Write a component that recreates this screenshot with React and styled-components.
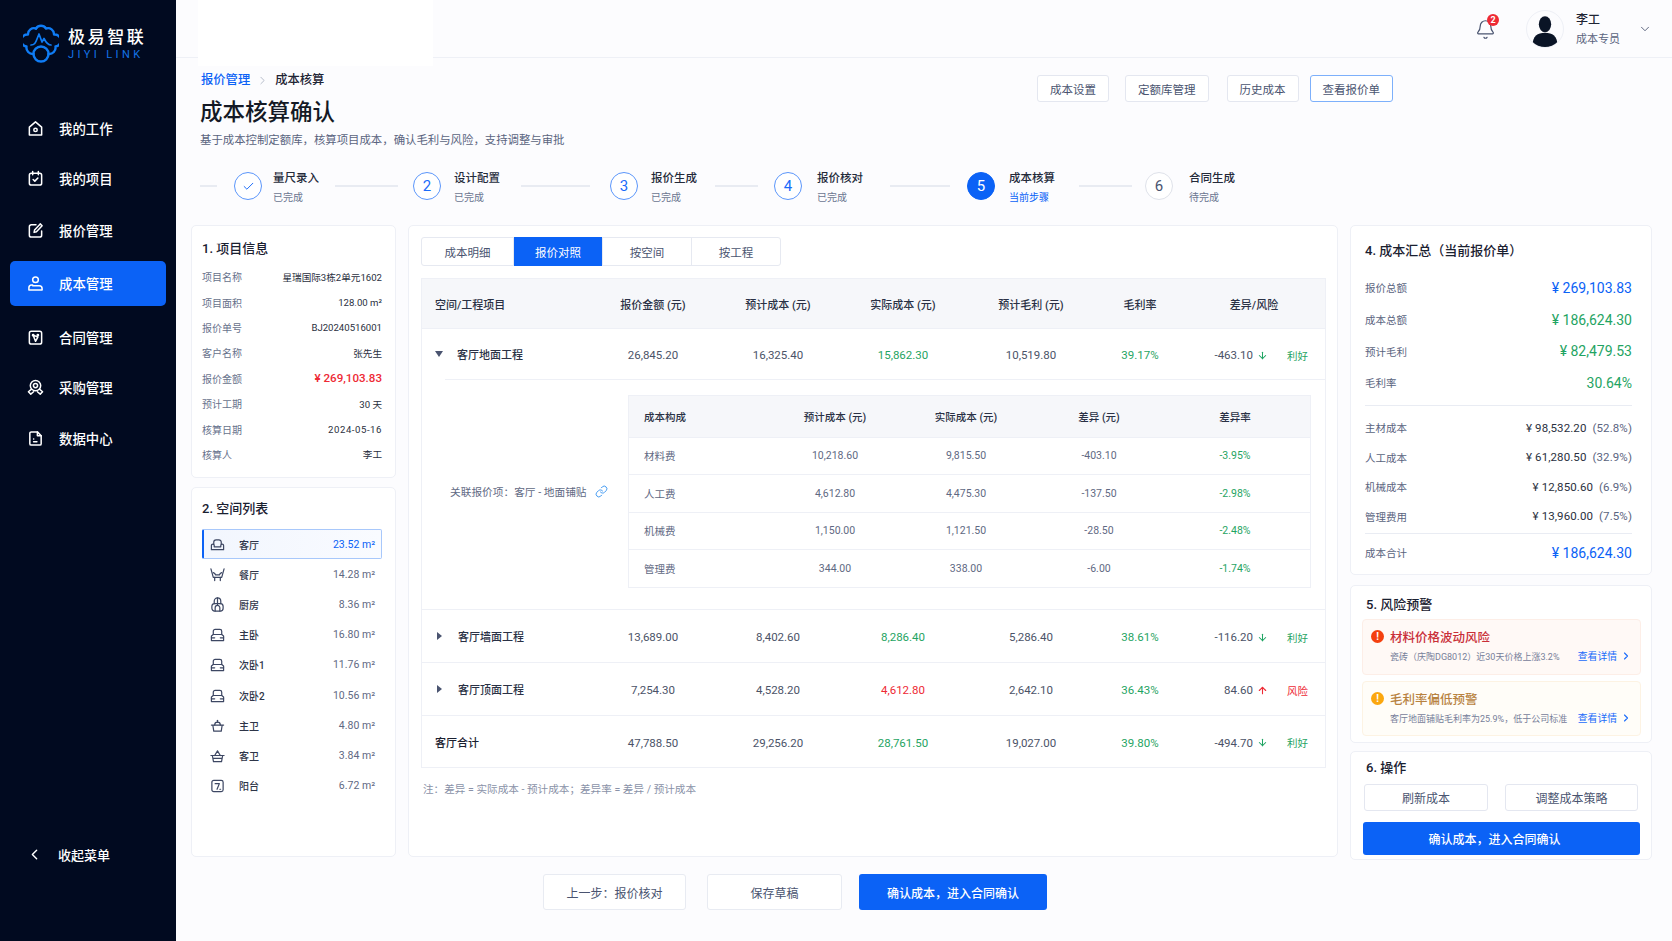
import React from 'react';
import styled, { createGlobalStyle } from 'styled-components';
import { Bell, Check, ChevronDown, ChevronLeft, ChevronRight, Link as LinkIcon, ArrowDown, ArrowUp } from 'lucide-react';

const GlobalStyle = createGlobalStyle`
    * { box-sizing: border-box; }
    html, body { margin: 0; padding: 0; height: 100%; }
    body {
        font-family: Roboto, "Noto Sans CJK SC", sans-serif;
        color: #1f2535;
        background: #fcfcfe;
        overflow: hidden;
    }
`;

const BLUE = '#0b62f6';
const GREEN = '#1fa463';
const RED = '#ee2a35';

/* testi con punteggiatura a tutta larghezza */
const TXT = {
    subtitle: '基于成本控制定额库\uFF0C核算项目成本\uFF0C确认毛利与风险\uFF0C支持调整与审批',
    related: '关联报价项\uFF1A客厅 - 地面铺贴',
    note: '注\uFF1A差异 = 实际成本 - 预计成本\uFF1B差异率 = 差异 / 预计成本',
    summary: '4. 成本汇总\uFF08当前报价单\uFF09',
    alertA: '瓷砖\uFF08庆陶DG8012\uFF09近30天价格上涨3.2%',
    alertB: '客厅地面铺贴毛利率为25.9%\uFF0C低于公司标准',
    confirm: '确认成本\uFF0C进入合同确认',
    prev: '上一步\uFF1A报价核对',
};

/* icone menu */
const NavIcon = ({ children }) => (
    <svg width="17" height="17" viewBox="0 0 18 18" fill="none" stroke="#fff" strokeWidth="1.6" strokeLinecap="round" strokeLinejoin="round">
        {children}
    </svg>
);

const navItems = [
    { label: '我的工作', top: 0, icon: <><path d="M2.5 7.5 9 2l6.5 5.5V16h-13z" /><circle cx="9" cy="10.5" r="1.8" /></> },
    { label: '我的项目', top: 5, icon: <><rect x="2.5" y="3.5" width="13" height="12.5" rx="2" /><path d="M6 1.5v3.5M12 1.5v3.5M6.5 10l1.8 1.8L11.5 8.5" /></> },
    { label: '报价管理', top: 7, icon: <><path d="M15.5 9.5V14a2 2 0 0 1-2 2h-9a2 2 0 0 1-2-2V5a2 2 0 0 1 2-2h5" /><path d="M14 2 8 8.5 7.5 11l2.5-.6L16 4z" /></> },
    { label: '成本管理', top: 8, active: true, icon: <><circle cx="9" cy="5" r="3" /><path d="M6 10.5H5a3 3 0 0 0-3 3V16h14v-1.5a3 3 0 0 0-3-3H6z" /></> },
    { label: '合同管理', top: 9, icon: <><rect x="2.5" y="2.5" width="13" height="13.5" rx="2" /><path d="m6.5 6.5 5 2-2.5 4.5z" /><circle cx="6.5" cy="6.5" r=".7" /><circle cx="11.5" cy="6.5" r=".7" /></> },
    { label: '采购管理', top: 5, icon: <><circle cx="9" cy="7" r="5.5" /><circle cx="9" cy="7" r="2.2" /><path d="M4.5 11 1.5 13.5 4 16l3-2.5M13.5 11l3 2.5L14 16l-3-2.5" /></> },
    { label: '数据中心', top: 6, icon: <><path d="M3 3.5A1.5 1.5 0 0 1 4.5 2H11l4 4v8.500a1.500 1.500 0 0 1-1.500 1.500h-9A1.500 1.500 0 0 1 3 14.500z" /><path d="M11 2v4h4M7 9.500h.1M7 12.500h3.500" /></> },
];

const steps = [
    { n: 1, title: '量尺录入', sub: '已完成', state: 'done', line: [17, 0, 17], gap: 11 },
    { n: 2, title: '设计配置', sub: '已完成', state: 'done', line: [63, 16, 15], gap: 13 },
    { n: 3, title: '报价生成', sub: '已完成', state: 'done', line: [69, 21, 20], gap: 13 },
    { n: 4, title: '报价核对', sub: '已完成', state: 'done', line: [43, 18, 16], gap: 15 },
    { n: 5, title: '成本核算', sub: '当前步骤', state: 'current', line: [60, 27, 17], gap: 14 },
    { n: 6, title: '合同生成', sub: '待完成', state: 'todo', line: [53, 24, 13], gap: 16 },
];

const projectInfo = [
    { k: '项目名称', v: '星瑞国际3栋2单元1602' },
    { k: '项目面积', v: '128.00 m²' },
    { k: '报价单号', v: 'BJ20240516001' },
    { k: '客户名称', v: '张先生' },
    { k: '报价金额', v: '¥ 269,103.83', strong: true },
    { k: '预计工期', v: '30 天' },
    { k: '核算日期', v: '2024-05-16', spaced: true },
    { k: '核算人', v: '李工' },
];

/* icone spazi */
const sofa = <><path d="M4 7.5v-2A2.5 2.5 0 0 1 6.5 3h3A2.5 2.5 0 0 1 12 5.5v2" /><path d="M1.500 9a1.500 1.500 0 0 1 3 0v1.500h7V9a1.500 1.500 0 0 1 3 0v4.500h-13z" /></>;
const bed = <><path d="M3.500 8V4.500a2 2 0 0 1 2-2h5a2 2 0 0 1 2 2V8" /><path d="M1.500 9.500 3.500 8h9l2 1.500v5h-13z" /><path d="M1.500 11.500h3.500M11 11.500h3.500" /></>;
const basket = <><path d="M1.500 7.500h13M3 7.500l1 6.500h8l1-6.500" /><path d="M5 7.500a3 3 0 0 1 6 0" /><path d="M8 2.500v2" /></>;
const basket2 = <><path d="M1 8h14M2.500 8l1.200 6.500h8.600L13.500 8M3.500 11h9" /><path d="M5 8l3-5 3 5" /></>;
const spaces = [
    { name: '客厅', area: '23.52 m²', icon: sofa, active: true },
    { name: '餐厅', area: '14.28 m²', icon: <><path d="M1 2 3.500 11h9L15 2" /><path d="M3.500 6c1.500.5 2 1 2.500 2.500h4c.5-1.500 1-2 2.500-2.500M5 11v3.500M11 11v3.500" /></> },
    { name: '厨房', area: '8.36 m²', icon: <><path d="M4.500 7V4.500a3.500 3.500 0 0 1 7 0V7" /><rect x="2" y="7" width="12" height="8" rx="3" /><path d="M5.500 15v-3.500a2.500 2.500 0 0 1 5 0V15M8 1v8" /></> },
    { name: '主卧', area: '16.80 m²', icon: bed },
    { name: '次卧1', area: '11.76 m²', icon: bed },
    { name: '次卧2', area: '10.56 m²', icon: bed },
    { name: '主卫', area: '4.80 m²', icon: basket },
    { name: '客卫', area: '3.84 m²', icon: basket2 },
    { name: '阳台', area: '6.72 m²', icon: <><rect x="2" y="2.5" width="12" height="12" rx="2" /><path d="M5.500 6h4.500L7.500 12M10.500 12h.8" /></> },
];

const tabs = ['成本明细', '报价对照', '按空间', '按工程'];
const headCols = ['空间/工程项目', '报价金额 (元)', '预计成本 (元)', '实际成本 (元)', '预计毛利 (元)', '毛利率', '差异/风险'];

const subHead = ['成本构成', '预计成本 (元)', '实际成本 (元)', '差异 (元)', '差异率'];
const subRows = [
    ['材料费', '10,218.60', '9,815.50', '-403.10', '-3.95%'],
    ['人工费', '4,612.80', '4,475.30', '-137.50', '-2.98%'],
    ['机械费', '1,150.00', '1,121.50', '-28.50', '-2.48%'],
    ['管理费', '344.00', '338.00', '-6.00', '-1.74%'],
];

const summaryTop = [
    ['报价总额', '¥ 269,103.83', 'blue'],
    ['成本总额', '¥ 186,624.30', 'green'],
    ['预计毛利', '¥ 82,479.53', 'green'],
    ['毛利率', '30.64%', 'green'],
];
const summaryCost = [
    ['主材成本', '¥ 98,532.20', '(52.8%)'],
    ['人工成本', '¥ 61,280.50', '(32.9%)'],
    ['机械成本', '¥ 12,850.60', '(6.9%)'],
    ['管理费用', '¥ 13,960.00', '(7.5%)'],
];

const Risk = ({ risky, value }) => (
    <RiskCell>
        {value}
        <RiskArrow $risky={risky}>{risky ? <ArrowUp size={11} strokeWidth={2.4} /> : <ArrowDown size={11} strokeWidth={2.2} />}</RiskArrow>
        <RiskTag $risky={risky}>{risky ? '风险' : '利好'}</RiskTag>
    </RiskCell>
);

const ProjectRow = ({ name, open, vals, actual, rate, diff, risky, h }) => (
    <Row $h={h} $line>
        <NameCell>
            <Caret $open={open} />
            {name}
        </NameCell>
        <NumCell>{vals[0]}</NumCell>
        <NumCell>{vals[1]}</NumCell>
        <NumCell $color={risky ? RED : GREEN}>{actual}</NumCell>
        <NumCell>{vals[2]}</NumCell>
        <NumCell $color={GREEN}>{rate}</NumCell>
        <Risk risky={risky} value={diff} />
    </Row>
);

const App = () => {
    return (
        <Page>
            <GlobalStyle />
            <Sidebar>
                <Brand>
                    <svg width="36" height="42" viewBox="0 0 36 42" fill="none" stroke="#0f7cf5" strokeWidth="2.4" strokeLinecap="round" strokeLinejoin="round">
                        <path d="M13 6.5a6 6 0 0 1 10 0 6 6 0 0 1 8 6 6 6 0 0 1 1.500 12 6.500 6.500 0 0 1-7 7.500" />
                        <path d="M13 6.5a6 6 0 0 0-8 6 6 6 0 0 0-1.500 12 6.500 6.500 0 0 0 7 7.500" />
                        <circle cx="18" cy="32" r="7.5" />
                        <path d="M8 23c3.500 0 4.500-2 6-6l2-5 3 8 2-3.500c1.500 3 3.500 6.500 7 6.500" strokeWidth="1.7" />
                    </svg>
                    <BrandText>
                        <BrandName>极易智联</BrandName>
                        <BrandSub>JIYI LINK</BrandSub>
                    </BrandText>
                </Brand>
                <NavList>
                    {navItems.map((item) => (
                        <NavItem key={item.label} $active={item.active} $top={item.top}>
                            <NavIcon>{item.icon}</NavIcon>
                            {item.label}
                        </NavItem>
                    ))}
                </NavList>
                <Collapse>
                    <ChevronLeft size={17} strokeWidth={2} />
                    收起菜单
                </Collapse>
            </Sidebar>

            <Main>
                <Topbar>
                    <TopBlank />
                    <BellWrap>
                        <Bell size={21} strokeWidth={1.4} color="#4a5470" />
                        <Badge>2</Badge>
                    </BellWrap>
                    <Avatar>
                        <svg width="38" height="38" viewBox="0 0 38 38">
                            <ellipse cx="19" cy="14" rx="6.5" ry="8.5" fill="#0a1426" />
                            <path d="M6 35c0-8 5-12 13-12s13 4 13 12c-3 2-8 3-13 3s-10-1-13-3z" fill="#0a1426" />
                        </svg>
                    </Avatar>
                    <UserText>
                        <UserName>李工</UserName>
                        <UserRole>成本专员</UserRole>
                    </UserText>
                    <ChevronDown size={14} strokeWidth={1.5} color="#4a5470" />
                </Topbar>

                <Content>
                    <Head>
                        <div>
                            <Crumbs>
                                <CrumbLink>报价管理</CrumbLink>
                                <ChevronRight size={13} strokeWidth={1.3} color="#9aa2b5" />
                                <span>成本核算</span>
                            </Crumbs>
                            <Title>成本核算确认</Title>
                            <Subtitle>{TXT.subtitle}</Subtitle>
                        </div>
                        <HeadButtons>
                            <ToolBtn>成本设置</ToolBtn>
                            <ToolBtn>定额库管理</ToolBtn>
                            <ToolBtn>历史成本</ToolBtn>
                            <ToolBtn $active>查看报价单</ToolBtn>
                        </HeadButtons>
                    </Head>

                    <Steps>
                        {steps.map((s) => (
                            <React.Fragment key={s.n}>
                                <StepLine $w={s.line[0]} $before={s.line[1]} $after={s.line[2]} />
                                <Step $gap={s.gap}>
                                    <StepCircle $state={s.state}>
                                        {s.n === 1 ? <Check size={13} strokeWidth={1.8} /> : s.n}
                                    </StepCircle>
                                    <StepText>
                                        <StepTitle>{s.title}</StepTitle>
                                        <StepSub $current={s.state === 'current'}>{s.sub}</StepSub>
                                    </StepText>
                                </Step>
                            </React.Fragment>
                        ))}
                    </Steps>

                    <Board>
                        <Column>
                            <InfoCard>
                                <CardTitle>1. 项目信息</CardTitle>
                                {projectInfo.map((r) => (
                                    <InfoRow key={r.k}>
                                        <InfoKey>{r.k}</InfoKey>
                                        <InfoVal $strong={r.strong} $spaced={r.spaced}>{r.v}</InfoVal>
                                    </InfoRow>
                                ))}
                            </InfoCard>
                            <SpaceCard>
                                <CardTitle>2. 空间列表</CardTitle>
                                <SpaceList>
                                    {spaces.map((s) => (
                                        <SpaceRow key={s.name} $active={s.active}>
                                            <svg width="15" height="15" viewBox="0 0 16 16" fill="none" stroke="#3d4763" strokeWidth="1.3" strokeLinecap="round" strokeLinejoin="round">
                                                {s.icon}
                                            </svg>
                                            <SpaceName>{s.name}</SpaceName>
                                            <SpaceArea $active={s.active}>{s.area}</SpaceArea>
                                        </SpaceRow>
                                    ))}
                                </SpaceList>
                            </SpaceCard>
                        </Column>

                        <TableCard>
                            <Tabs>
                                {tabs.map((t) => (
                                    <Tab key={t} $active={t === '报价对照'}>{t}</Tab>
                                ))}
                            </Tabs>
                            <Table>
                                <HeadRow>
                                    {headCols.map((c, i) => (
                                        <HeadCell key={c} $left={i === 0}>{c}</HeadCell>
                                    ))}
                                </HeadRow>
                                <ProjectRow name="客厅地面工程" open h={50} vals={['26,845.20', '16,325.40', '10,519.80']} actual="15,862.30" rate="39.17%" diff="-463.10" />
                                <InsetLine />
                                <Expand>
                                    <Related>
                                        {TXT.related}
                                        <LinkIcon size={13} strokeWidth={1.6} color="#2a8cf0" />
                                    </Related>
                                    <SubTable>
                                        <SubHeadRow>
                                            {subHead.map((c, i) => (
                                                <SubCell key={c} $left={i === 0} $head>{c}</SubCell>
                                            ))}
                                        </SubHeadRow>
                                        {subRows.map((r) => (
                                            <SubRow key={r[0]}>
                                                <SubCell $left>{r[0]}</SubCell>
                                                <SubCell>{r[1]}</SubCell>
                                                <SubCell>{r[2]}</SubCell>
                                                <SubCell>{r[3]}</SubCell>
                                                <SubCell $green>{r[4]}</SubCell>
                                            </SubRow>
                                        ))}
                                    </SubTable>
                                </Expand>
                                <ProjectRow name="客厅墙面工程" h={53} vals={['13,689.00', '8,402.60', '5,286.40']} actual="8,286.40" rate="38.61%" diff="-116.20" />
                                <ProjectRow name="客厅顶面工程" h={53} vals={['7,254.30', '4,528.20', '2,642.10']} actual="4,612.80" rate="36.43%" diff="84.60" risky />
                                <Row $h={51}>
                                    <TotalName>客厅合计</TotalName>
                                    <NumCell>47,788.50</NumCell>
                                    <NumCell>29,256.20</NumCell>
                                    <NumCell $color={GREEN}>28,761.50</NumCell>
                                    <NumCell>19,027.00</NumCell>
                                    <NumCell $color={GREEN}>39.80%</NumCell>
                                    <Risk value="-494.70" />
                                </Row>
                            </Table>
                            <Note>{TXT.note}</Note>
                        </TableCard>

                        <Column>
                            <SummaryCard>
                                <CardTitle>{TXT.summary}</CardTitle>
                                {summaryTop.map(([k, v, tone]) => (
                                    <BigRow key={k}>
                                        <SumKey>{k}</SumKey>
                                        <BigVal $tone={tone}>{v}</BigVal>
                                    </BigRow>
                                ))}
                                <SumLine $top={6} $bottom={7} />
                                {summaryCost.map(([k, v, pct]) => (
                                    <SmallRow key={k}>
                                        <SumKey>{k}</SumKey>
                                        <SmallVal>{v}<Pct>{pct}</Pct></SmallVal>
                                    </SmallRow>
                                ))}
                                <SumLine $top={2} $bottom={3} />
                                <BigRow>
                                    <SumKey>成本合计</SumKey>
                                    <BigVal $tone="blue">¥ 186,624.30</BigVal>
                                </BigRow>
                            </SummaryCard>

                            <RiskCard>
                                <CardTitle>5. 风险预警</CardTitle>
                                <Alert $tone="red">
                                    <AlertHead>
                                        <AlertDot $tone="red">!</AlertDot>
                                        <AlertTitle $tone="red">材料价格波动风险</AlertTitle>
                                    </AlertHead>
                                    <AlertBody>
                                        {TXT.alertA}
                                        <AlertLink>查看详情<ChevronRight size={12} strokeWidth={2.2} /></AlertLink>
                                    </AlertBody>
                                </Alert>
                                <Alert $tone="amber">
                                    <AlertHead>
                                        <AlertDot $tone="amber">!</AlertDot>
                                        <AlertTitle $tone="amber">毛利率偏低预警</AlertTitle>
                                    </AlertHead>
                                    <AlertBody>
                                        {TXT.alertB}
                                        <AlertLink>查看详情<ChevronRight size={12} strokeWidth={2.2} /></AlertLink>
                                    </AlertBody>
                                </Alert>
                            </RiskCard>

                            <ActionCard>
                                <CardTitle>6. 操作</CardTitle>
                                <ActionRow>
                                    <ActionBtn $w={124}>刷新成本</ActionBtn>
                                    <ActionBtn $w={133}>调整成本策略</ActionBtn>
                                </ActionRow>
                                <ConfirmBtn>{TXT.confirm}</ConfirmBtn>
                            </ActionCard>
                        </Column>
                    </Board>

                    <Footer>
                        <FootBtn $w={143}>{TXT.prev}</FootBtn>
                        <FootBtn $w={135}>保存草稿</FootBtn>
                        <FootBtn $w={188} $primary>{TXT.confirm}</FootBtn>
                    </Footer>
                </Content>
            </Main>
        </Page>
    );
};

/* PAGINA */
const Page = styled.div`
    display: flex;
    width: 1672px;
    height: 941px;
    overflow: hidden;
`;

/* SIDEBAR */
const Sidebar = styled.aside`
    width: 176px;
    flex-shrink: 0;
    background: #010a20;
    color: #fff;
    display: flex;
    flex-direction: column;
    padding: 22px 10px 0;
`;

const Brand = styled.div`
    display: flex;
    align-items: center;
    gap: 9px;
    padding-left: 13px;
    height: 42px;
`;

const BrandText = styled.div`
    display: flex;
    flex-direction: column;
    margin-top: 3px;
`;

const BrandName = styled.div`
    font-size: 17px;
    line-height: 21px;
    letter-spacing: 2.6px;
    font-weight: 500;
`;

const BrandSub = styled.div`
    font-size: 11px;
    line-height: 14px;
    letter-spacing: 3.4px;
    color: #1474e6;
`;

const NavList = styled.nav`
    display: flex;
    flex-direction: column;
    margin-top: 41.5px;
`;

const NavItem = styled.div`
    height: 45px;
    flex-shrink: 0;
    margin-top: ${(p) => p.$top}px;
    display: flex;
    align-items: center;
    gap: 15px;
    padding-left: 17px;
    border-radius: 5px;
    font-size: 13.4px;
    font-weight: 500;
    background: ${(p) => (p.$active ? '#0b62f6' : 'transparent')};
`;

const Collapse = styled.div`
    display: flex;
    align-items: center;
    gap: 15px;
    padding-left: 16px;
    margin-top: auto;
    margin-bottom: 77px;
    font-size: 13px;
    font-weight: 500;
`;

/* TOPBAR */
const Main = styled.main`
    flex: 1;
    min-width: 0;
    display: flex;
    flex-direction: column;
`;

const Topbar = styled.header`
    position: relative;
    height: 58px;
    flex-shrink: 0;
    display: flex;
    align-items: center;
    justify-content: flex-end;
    padding-right: 20px;
    border-bottom: 1px solid #eef0f6;
`;

const TopBlank = styled.div`
    position: absolute;
    left: 22px;
    top: 0;
    width: 235px;
    height: 66px;
    background: #fff;
`;

const BellWrap = styled.div`
    position: relative;
    display: flex;
    margin: 2px 30px 0 0;
`;

const Badge = styled.span`
    position: absolute;
    top: -5px;
    right: -3px;
    width: 12px;
    height: 12px;
    border-radius: 50%;
    background: ${RED};
    color: #fff;
    font-size: 9px;
    font-weight: 700;
    line-height: 12px;
    text-align: center;
`;

const Avatar = styled.div`
    width: 38px;
    height: 38px;
    border-radius: 50%;
    border: 1px solid #eef0f6;
    overflow: hidden;
    display: flex;
    align-items: center;
    justify-content: center;
    margin-right: 12px;
`;

const UserText = styled.div`
    width: 62px;
    margin-top: 3px;
`;

const UserName = styled.div`
    font-size: 12px;
    line-height: 20px;
    font-weight: 500;
`;

const UserRole = styled.div`
    font-size: 11px;
    line-height: 20px;
    color: #5a6480;
`;

/* INTESTAZIONE */
const Content = styled.div`
    position: relative;
    flex: 1;
    padding: 0 20px 0 15px;
`;

const Head = styled.div`
    display: flex;
    justify-content: space-between;
    align-items: flex-start;
    padding: 13px 259px 0 10px;
`;

const Crumbs = styled.div`
    display: flex;
    align-items: center;
    gap: 6px;
    font-size: 12.3px;
    line-height: 18px;
    font-weight: 500;
`;

const CrumbLink = styled.span`
    color: ${BLUE};
`;

const Title = styled.h1`
    margin: 8px 0 0 -1px;
    font-size: 22.5px;
    line-height: 30px;
    font-weight: 500;
    color: #141925;
`;

const Subtitle = styled.p`
    margin: 5px 0 0 -1px;
    font-size: 11.4px;
    line-height: 16px;
    color: #5a6480;
`;

const HeadButtons = styled.div`
    display: flex;
    padding-top: 4px;

    & > :nth-child(1) { margin-right: 16px; }
    & > :nth-child(2) { margin-right: 18px; }
    & > :nth-child(3) { margin-right: 11px; }
`;

const ToolBtn = styled.button`
    height: 27px;
    padding: 0 12px;
    border-radius: 3px;
    border: 1px solid ${(p) => (p.$active ? '#7db0fb' : '#e4e7f0')};
    background: #fff;
    color: #4a5470;
    font: inherit;
    font-size: 11.5px;
`;

/* STEPPER */
const Steps = styled.div`
    display: flex;
    align-items: center;
    height: 40px;
    margin-top: 18px;
    padding-left: 9px;
`;

const StepLine = styled.div`
    width: ${(p) => p.$w}px;
    height: 2px;
    flex-shrink: 0;
    margin: 0 ${(p) => p.$after}px 0 ${(p) => p.$before}px;
    background: #e8ebf2;
`;

const Step = styled.div`
    display: flex;
    align-items: center;
    gap: ${(p) => p.$gap}px;
`;

const StepText = styled.div`
    margin-top: 4px;
`;

const StepCircle = styled.div`
    width: 28px;
    height: 28px;
    flex-shrink: 0;
    border-radius: 50%;
    display: flex;
    align-items: center;
    justify-content: center;
    font-size: 15px;
    background: ${(p) => (p.$state === 'current' ? BLUE : '#fff')};
    color: ${(p) => (p.$state === 'current' ? '#fff' : p.$state === 'todo' ? '#4a5470' : '#1a6bfa')};
    border: 1.5px solid ${(p) => (p.$state === 'current' ? BLUE : p.$state === 'todo' ? '#dfe2ea' : '#5b96fb')};
`;

const StepTitle = styled.div`
    font-size: 11.5px;
    line-height: 20px;
    font-weight: 500;
    color: #242a3a;
`;

const StepSub = styled.div`
    font-size: 10px;
    line-height: 20px;
    color: ${(p) => (p.$current ? BLUE : '#6b7590')};
`;

/* GRIGLIA CENTRALE */
const Board = styled.div`
    display: grid;
    grid-template-columns: 205px 930px 302px;
    grid-template-rows: 632px;
    gap: 12px;
    margin-top: 19px;
`;

const Column = styled.div`
    display: flex;
    flex-direction: column;
    gap: 9px;
    min-height: 0;
`;

const Card = styled.section`
    background: #fff;
    border: 1px solid #eef0f6;
    border-radius: 5px;
`;

const CardTitle = styled.h3`
    margin: 0;
    font-size: 13px;
    line-height: 20px;
    font-weight: 500;
    color: #1a2030;
`;

/* PROGETTO */
const InfoCard = styled(Card)`
    height: 253px;
    padding: 13px 13px 0 10px;

    h3 { margin-bottom: 5px; }
`;

const InfoRow = styled.div`
    display: flex;
    align-items: center;
    justify-content: space-between;
    height: 25.4px;
    font-size: 10px;
`;

const InfoKey = styled.span`
    color: #68728c;
`;

const InfoVal = styled.span`
    color: ${(p) => (p.$strong ? RED : '#2a3040')};
    font-size: ${(p) => (p.$strong ? '11.6px' : '9.6px')};
    font-weight: ${(p) => (p.$strong ? 500 : 400)};
    letter-spacing: ${(p) => (p.$spaced ? '.55px' : '0')};
`;

/* SPAZI */
const SpaceCard = styled(Card)`
    flex: 1;
    padding: 11px 13px 0 10px;
`;

const SpaceList = styled.div`
    margin-top: 10px;
`;

const SpaceRow = styled.div`
    display: flex;
    align-items: center;
    height: 30.2px;
    padding: 0 6px;
    font-size: 10px;
    border-radius: 2px;
    border: 1px solid ${(p) => (p.$active ? '#a8c8fb' : 'transparent')};
    border-left: 2px solid ${(p) => (p.$active ? BLUE : 'transparent')};
    background: ${(p) => (p.$active ? 'linear-gradient(90deg, #f2f6fe, #f9fbff)' : 'transparent')};
`;

const SpaceName = styled.span`
    margin-left: 14px;
    font-weight: 500;
    color: #2e3548;
`;

const SpaceArea = styled.span`
    margin-left: auto;
    font-size: 10.5px;
    color: ${(p) => (p.$active ? BLUE : '#5f6983')};
`;

/* TABELLA */
const TableCard = styled(Card)`
    padding: 11px 12px 0;
`;

const Tabs = styled.div`
    display: grid;
    grid-template-columns: 92px 89px 89px 1fr;
    width: 360px;
    height: 29px;
    border: 1px solid #e6e9f1;
    border-radius: 3px;
    margin-bottom: 12px;
`;

const Tab = styled.div`
    display: flex;
    align-items: center;
    justify-content: center;
    font-size: 11.5px;
    color: ${(p) => (p.$active ? '#fff' : '#4a5470')};
    background: ${(p) => (p.$active ? BLUE : 'transparent')};
    border-right: 1px solid #e6e9f1;
    margin: -1px 0;

    &:last-child { border-right: 0; }
`;

const Table = styled.div`
    width: 905px;
    border: 1px solid #eef0f6;
`;

const gridCols = '169px 124px 126px 124px 132px 86px 1fr';

const HeadRow = styled.div`
    display: grid;
    grid-template-columns: ${gridCols};
    align-items: center;
    height: 50px;
    background: #f6f7fa;
    border-bottom: 1px solid #eef0f6;
`;

const HeadCell = styled.div`
    font-size: 11px;
    font-weight: 500;
    color: #2a3145;
    text-align: ${(p) => (p.$left ? 'left' : 'center')};
    padding-left: ${(p) => (p.$left ? '13px' : '0')};
`;

const Row = styled.div`
    display: grid;
    grid-template-columns: ${gridCols};
    align-items: center;
    height: ${(p) => p.$h}px;
    border-bottom: ${(p) => (p.$line && p.$h > 50 ? '1px solid #eef0f6' : '0')};
`;

const NameCell = styled.div`
    display: flex;
    align-items: center;
    gap: 14px;
    padding-left: 13px;
    font-size: 11px;
    font-weight: 500;
    color: #2a3145;
`;

const TotalName = styled.div`
    padding-left: 13px;
    font-size: 11px;
    font-weight: 500;
    color: #1a2030;
`;

const Caret = styled.span`
    width: 0;
    height: 0;
    flex-shrink: 0;
    ${(p) => (p.$open
        ? 'border-left: 4.5px solid transparent; border-right: 4.5px solid transparent; border-top: 6px solid #4a5470;'
        : 'margin: 0 2px; border-top: 4.5px solid transparent; border-bottom: 4.5px solid transparent; border-left: 5px solid #4a5470;')}
`;

const NumCell = styled.div`
    text-align: center;
    font-size: 11.5px;
    padding-top: 2px;
    color: ${(p) => p.$color || '#4b5368'};
`;

const RiskCell = styled.div`
    display: flex;
    align-items: center;
    justify-content: flex-end;
    padding: 2px 17px 0 0;
    font-size: 11.5px;
    color: #4b5368;
`;

const RiskArrow = styled.span`
    display: flex;
    margin: 0 0 0 4px;
    color: ${(p) => (p.$risky ? RED : GREEN)};
`;

const RiskTag = styled.span`
    margin-left: 19px;
    font-size: 10.5px;
    color: ${(p) => (p.$risky ? RED : GREEN)};
`;

const InsetLine = styled.div`
    height: 1px;
    margin-left: 23px;
    background: #eef0f6;
`;

const Expand = styled.div`
    display: flex;
    align-items: center;
    justify-content: space-between;
    height: 230px;
    padding: 14px 14px 21px 28px;
    border-bottom: 1px solid #eef0f6;
`;

const Related = styled.div`
    display: flex;
    align-items: center;
    gap: 8px;
    font-size: 10.7px;
    color: #5f6983;
`;

const SubTable = styled.div`
    width: 683px;
    height: 193px;
    border: 1px solid #eef0f6;
`;

const subCols = '141px 130px 132px 134px 1fr';

const SubHeadRow = styled.div`
    display: grid;
    grid-template-columns: ${subCols};
    align-items: center;
    height: 42px;
    background: #f6f7fa;
    border-bottom: 1px solid #eef0f6;
`;

const SubRow = styled.div`
    display: grid;
    grid-template-columns: ${subCols};
    align-items: center;
    height: 37.5px;
    border-bottom: 1px solid #eef0f6;

    &:last-child { border-bottom: 0; }
`;

const SubCell = styled.div`
    font-size: 10.5px;
    font-weight: ${(p) => (p.$head ? 500 : 400)};
    color: ${(p) => (p.$green ? GREEN : p.$head ? '#2a3145' : '#5f6983')};
    text-align: ${(p) => (p.$left ? 'left' : 'center')};
    padding-left: ${(p) => (p.$left ? '15px' : '0')};

    &:last-child { padding-right: 6px; }
`;

const Note = styled.div`
    margin-top: 13px;
    padding-left: 2px;
    font-size: 10.6px;
    line-height: 18px;
    color: #8a92a8;
`;

/* RIEPILOGO */
const SummaryCard = styled(Card)`
    height: 350px;
    flex-shrink: 0;
    padding: 15px 19px 0 14px;

    h3 { margin-bottom: 11px; }
`;

const BigRow = styled.div`
    display: flex;
    align-items: center;
    justify-content: space-between;
    height: 31.7px;
`;

const SumKey = styled.span`
    font-size: 10.5px;
    color: #5a6480;
`;

const BigVal = styled.span`
    font-size: 14px;
    color: ${(p) => (p.$tone === 'blue' ? BLUE : GREEN)};
`;

const SumLine = styled.div`
    height: 1px;
    margin: ${(p) => p.$top}px 0 ${(p) => p.$bottom}px;
    background: #e9ecf3;
`;

const SmallRow = styled.div`
    display: flex;
    align-items: center;
    justify-content: space-between;
    height: 29.5px;
`;

const SmallVal = styled.span`
    font-size: 11.5px;
    letter-spacing: .1px;
    color: #2a3040;
`;

const Pct = styled.span`
    margin-left: 6px;
    color: #5a6480;
`;

/* RISCHI */
const RiskCard = styled(Card)`
    height: 158px;
    flex-shrink: 0;
    margin-top: 1px;
    padding: 9px 10px 0 11px;
    display: flex;
    flex-direction: column;

    h3 { margin: 0 0 4px 4px; }
`;

const Alert = styled.div`
    height: ${(p) => (p.$tone === 'red' ? '58px' : '56px')};
    margin-bottom: 6px;
    padding: 6px 8px 0 8px;
    border-radius: 4px;
    border: 1px solid ${(p) => (p.$tone === 'red' ? '#fdeee7' : '#fdf3e3')};
    background: ${(p) => (p.$tone === 'red' ? '#fff9f6' : '#fffdf8')};
`;

const AlertHead = styled.div`
    display: flex;
    align-items: center;
    gap: 6px;
    height: 20px;
`;

const AlertDot = styled.span`
    width: 13px;
    height: 13px;
    border-radius: 50%;
    flex-shrink: 0;
    background: ${(p) => (p.$tone === 'red' ? '#f4400f' : '#fba70f')};
    color: #fff;
    font-size: 10px;
    font-weight: 700;
    line-height: 13px;
    text-align: center;
`;

const AlertTitle = styled.span`
    font-size: 12.5px;
    font-weight: 500;
    color: ${(p) => (p.$tone === 'red' ? '#c92f38' : '#b8823f')};
`;

const AlertBody = styled.div`
    display: flex;
    align-items: center;
    justify-content: space-between;
    padding-left: 19px;
    height: 16px;
    margin-top: 2px;
    font-size: 9px;
    color: #77809a;
`;

const AlertLink = styled.span`
    display: flex;
    align-items: center;
    gap: 3px;
    font-size: 9.8px;
    color: #1a6bfa;
`;

/* AZIONI */
const ActionCard = styled(Card)`
    height: 109px;
    flex-shrink: 0;
    margin-top: -1px;
    padding: 6px 11px 0 13px;

    h3 { margin: 0 0 6px 2px; }
`;

const ActionRow = styled.div`
    display: flex;
    gap: 17px;
`;

const ActionBtn = styled.button`
    width: ${(p) => p.$w}px;
    height: 27px;
    border: 1px solid #e4e7f0;
    border-radius: 3px;
    background: #fff;
    color: #4a5470;
    font: inherit;
    font-size: 12px;
`;

const ConfirmBtn = styled.button`
    display: block;
    width: 277px;
    height: 33px;
    margin: 11px 0 0 -1px;
    padding: 0 14px 0 0;
    border: 0;
    border-radius: 3px;
    background: ${BLUE};
    color: #fff;
    font: inherit;
    font-size: 12px;
    font-weight: 500;
`;

/* PIEDE */
const Footer = styled.div`
    display: flex;
    gap: 17px;
    margin-top: 17px;
    padding-left: 352px;

    & > :first-child { margin-right: 4px; }
`;

const FootBtn = styled.button`
    width: ${(p) => p.$w}px;
    height: 36px;
    border-radius: 3px;
    border: ${(p) => (p.$primary ? '0' : '1px solid #e8ebf2')};
    background: ${(p) => (p.$primary ? BLUE : '#fff')};
    color: ${(p) => (p.$primary ? '#fff' : '#4a5470')};
    font: inherit;
    font-size: 12px;
    font-weight: ${(p) => (p.$primary ? 500 : 400)};
`;

export default App;
